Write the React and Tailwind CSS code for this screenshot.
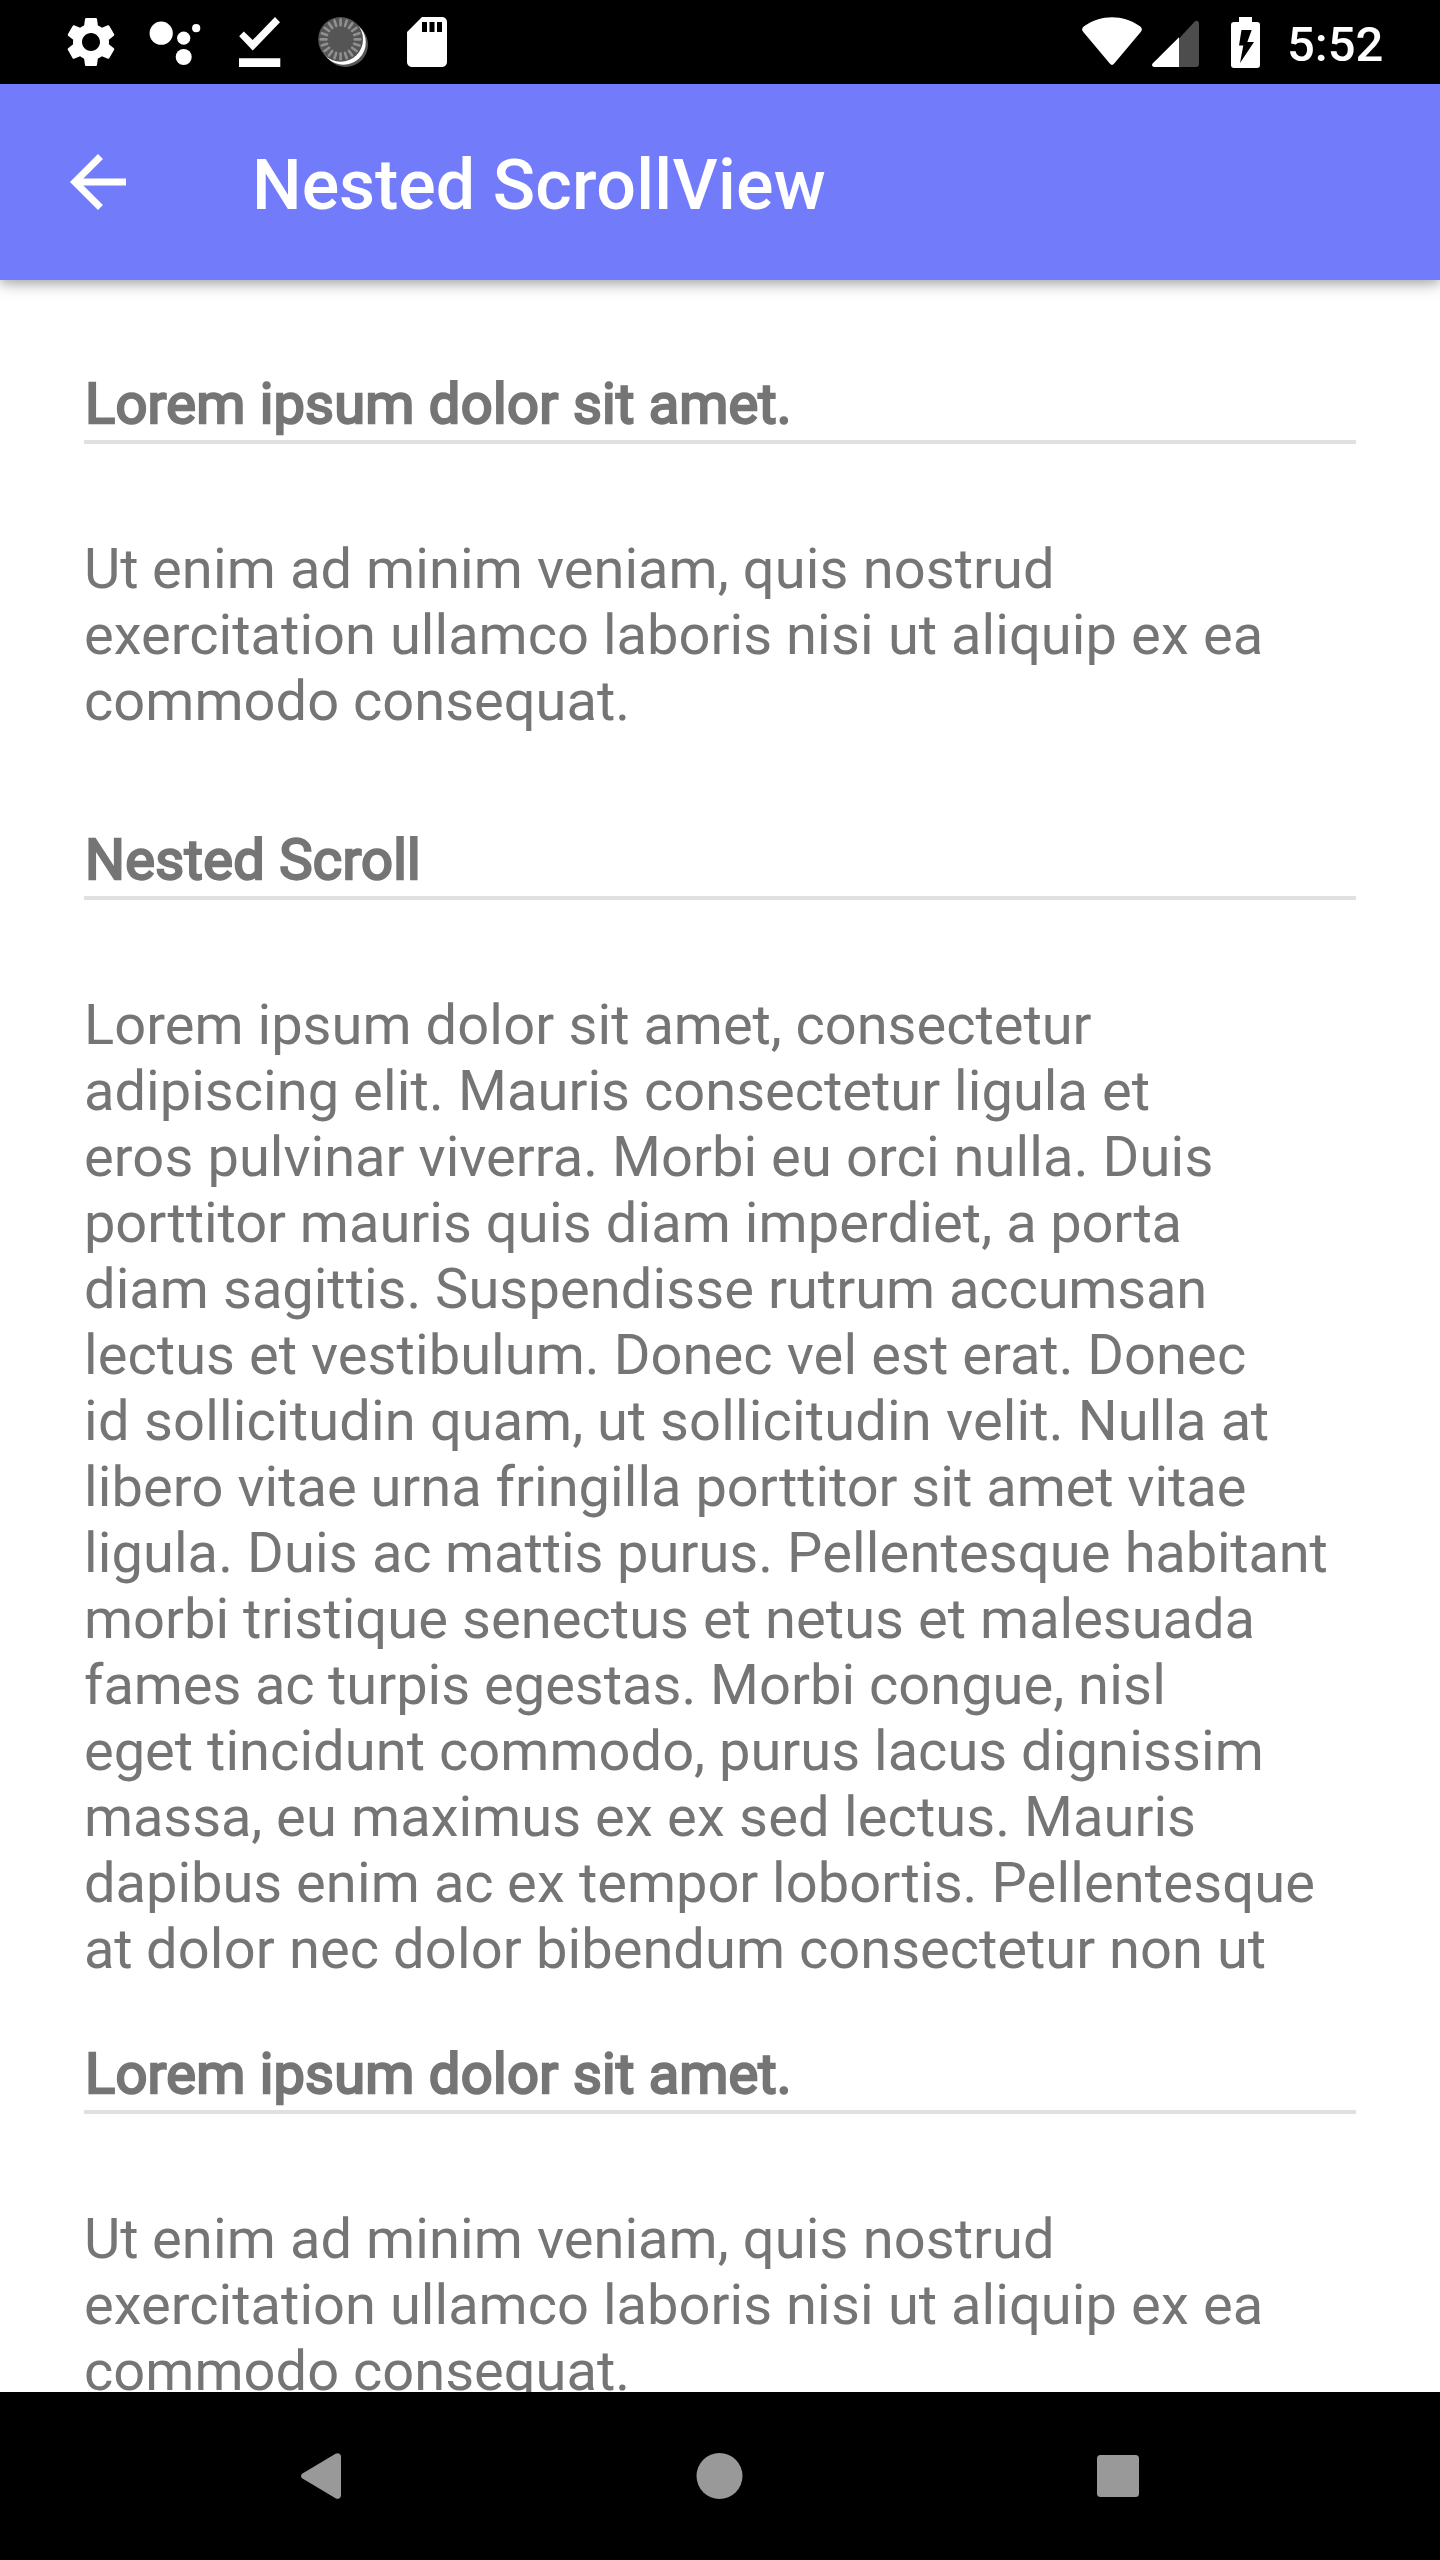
import { MdSettings, MdSdCard } from "react-icons/md";

const TICKS = Array.from({ length: 20 }, (_, i) => i * 18);

const ctx = document.createElement("canvas").getContext("2d");

// Average tracking that snaps each glyph advance to a whole pixel.
function snapTracking(word, size, weight) {
  ctx.font = `${weight} ${size}px Roboto`;
  let diff = 0;
  for (const ch of word) {
    const advance = ctx.measureText(ch).width;
    diff += Math.round(advance) - advance;
  }
  return diff / word.length;
}

function SnappedText({ text, size, weight = 400, extra = 0 }) {
  const words = text.match(/\S+\s*/g);
  return words.map((word, i) => (
    <span key={i} style={{ letterSpacing: `${(snapTracking(word, size, weight) + extra).toFixed(3)}px` }}>
      {word}
    </span>
  ));
}

function AssistantIcon() {
  return (
    <svg viewBox="0 0 60 60" className="size-[60px] fill-white">
      <circle cx="16.2" cy="21.2" r="11.6" />
      <circle cx="38.7" cy="26.2" r="6.6" />
      <circle cx="51.2" cy="16.2" r="4.1" />
      <circle cx="38.7" cy="45" r="8" />
    </svg>
  );
}

function DownloadDoneIcon() {
  return (
    <svg viewBox="0 0 60 60" className="size-[60px] fill-white">
      <path d="M10.2 24.3 14.8 19.6 23.7 28 46 5 51 10.2 23.7 38.6zM10 46.3h41.3v8.6H10z" />
    </svg>
  );
}

function DialIcon() {
  return (
    <svg viewBox="0 0 60 60" className="size-[60px]">
      <circle cx="32.6" cy="32.6" r="22.4" fill="#555" />
      <circle cx="30.4" cy="30.4" r="22.4" fill="#fff" />
      <circle cx="27.6" cy="27.4" r="22.4" fill="#555" />
      {TICKS.map((angle) => (
        <path
          key={angle}
          d="M27.6 7.6v5.6"
          stroke="#909090"
          strokeWidth="2.6"
          strokeLinecap="round"
          transform={`rotate(${angle} 27.6 27.4)`}
        />
      ))}
    </svg>
  );
}

function StatusBar() {
  return (
    <div className="flex h-[84px] shrink-0 items-center bg-black pl-[61px] text-white">
      <div className="flex gap-6">
        <MdSettings className="size-[60px]" />
        <AssistantIcon />
        <DownloadDoneIcon />
        <DialIcon />
        <MdSdCard className="size-[60px]" />
      </div>
      <svg viewBox="0 0 60 50" className="ml-[625px] h-[50px] w-[60px] fill-white">
        <path d="M2 9.3C19-2.8 41-2.8 58 9.3q3.200 2.300.900 5.400L32.200 46.600q-2.200 2.700-4.400 0L1.100 14.700Q-1.200 11.600 2 9.300z" />
      </svg>
      <svg viewBox="0 0 48 48" className="ml-[10px] mt-[3px] size-12">
        <path d="M27 18.500 42.800 1.600Q44.300.200 45.700 1q1.300.700 1.300 2.500v40.500q0 3-3 3H27z" fill="#4d4d4d" />
        <path d="M27 17.200V47H2.500q-1.700 0-2.300-1.300-.500-1.300.700-2.500z" fill="#fff" />
      </svg>
      <svg viewBox="0 0 29 51" className="ml-[31px] h-[51px] w-[29px]">
        <path d="M8 0h13v5h5q3 0 3 3v40q0 3-3 3H3q-3 0-3-3V8q0-3 3-3h5z" fill="#fff" />
        <path d="M10.500 13H20.700L16.300 25H23L9 46l3.300-17.500H8z" fill="#000" />
      </svg>
      <span className="ml-[27px] mt-[5px] text-[49px] font-medium leading-[58px]">5:52</span>
    </div>
  );
}

function AppBar() {
  return (
    <header className="z-10 flex h-[196px] shrink-0 items-center bg-[#727cfb] pl-[70px] text-white shadow-[0_5px_14px_rgba(0,0,0,0.26),0_3px_8px_rgba(0,0,0,0.1)]">
      <svg viewBox="4 4 16 16" className="size-14 fill-white">
        <path d="M20 11H7.830l5.590-5.590L12 4l-8 8 8 8 1.410-1.410L7.830 13H20v-2z" />
      </svg>
      <h1 className="ml-[126px] mt-[6px] text-[70px] font-medium leading-[82px]">
        <SnappedText text="Nested ScrollView" size={70} weight={500} extra={0.23} />
      </h1>
    </header>
  );
}

function Section({ title, lines }) {
  return (
    <section>
      <h2 className="relative left-px -top-px h-[66px] whitespace-nowrap [-webkit-text-stroke:2.33px_#757575]">
        <SnappedText text={title} size={56} extra={0.19} />
      </h2>
      <div className="mt-[2px] h-1 bg-[#e0e0e0]" />
      <p className="mt-[92px] whitespace-nowrap">
        {lines.map((line) => (
          <span key={line} className="block">
            <SnappedText text={line} size={56} />
          </span>
        ))}
      </p>
    </section>
  );
}

const SHORT = [
  "Ut enim ad minim veniam, quis nostrud",
  "exercitation ullamco laboris nisi ut aliquip ex ea",
  "commodo consequat.",
];

const NESTED = [
  "Lorem ipsum dolor sit amet, consectetur",
  "adipiscing elit. Mauris consectetur ligula et",
  "eros pulvinar viverra. Morbi eu orci nulla. Duis",
  "porttitor mauris quis diam imperdiet, a porta",
  "diam sagittis. Suspendisse rutrum accumsan",
  "lectus et vestibulum. Donec vel est erat. Donec",
  "id sollicitudin quam, ut sollicitudin velit. Nulla at",
  "libero vitae urna fringilla porttitor sit amet vitae",
  "ligula. Duis ac mattis purus. Pellentesque habitant",
  "morbi tristique senectus et netus et malesuada",
  "fames ac turpis egestas. Morbi congue, nisl",
  "eget tincidunt commodo, purus lacus dignissim",
  "massa, eu maximus ex ex sed lectus. Mauris",
  "dapibus enim ac ex tempor lobortis. Pellentesque",
  "at dolor nec dolor bibendum consectetur non ut",
];

function NavBar() {
  return (
    <nav className="flex h-[168px] shrink-0 bg-black pb-px pl-[122px]">
      <div className="grid w-[1195px] grid-cols-3 place-items-center fill-[#999]">
        <svg viewBox="0 0 40 46" className="h-[46px] w-10">
          <path d="M1.500 20.500 34.500.700Q36.500-.300 38.500.700 40 1.700 40 3.500v39q0 1.800-1.500 2.800-2 1-4 0L1.500 25.500Q0 24.500 0 23t1.500-2.500z" />
        </svg>
        <svg viewBox="0 0 47 46" className="h-[46px] w-[47px]">
          <circle cx="23.5" cy="23" r="23" />
        </svg>
        <svg viewBox="0 0 42 42" className="size-[42px]">
          <rect width="42" height="42" rx="3.500" />
        </svg>
      </div>
    </nav>
  );
}

export default function App() {
  return (
    <div className="flex h-[2560px] w-[1440px] flex-col overflow-hidden bg-white font-['Roboto',sans-serif]">
      <StatusBar />
      <AppBar />
      <main className="min-h-0 flex-1 overflow-hidden px-[84px] pt-[92px] text-[56px] leading-[66px] text-[#757575]">
        <Section title="Lorem ipsum dolor sit amet." lines={SHORT} />
        <div className="mt-[94px]">
          <Section title="Nested Scroll" lines={NESTED} />
        </div>
        <div className="mt-[60px]">
          <Section title="Lorem ipsum dolor sit amet." lines={SHORT} />
        </div>
      </main>
      <NavBar />
    </div>
  );
}
